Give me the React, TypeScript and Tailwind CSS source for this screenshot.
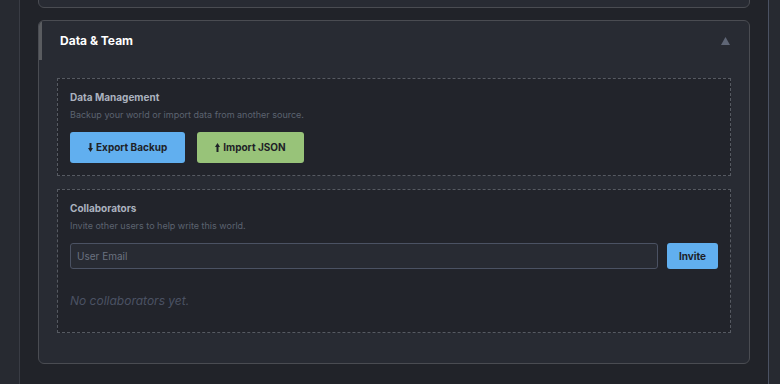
import React from "react";

function DownArrow() {
  return (
    <svg width="5" height="9" viewBox="0 0 5 9" className="inline-block">
      <rect x="1.5" y="0" width="2" height="5.5" fill="#1e2127" />
      <polygon points="0,5 5,5 2.5,9" fill="#1e2127" />
    </svg>
  );
}

function UpArrow() {
  return (
    <svg width="5" height="9" viewBox="0 0 5 9" className="inline-block">
      <rect x="1.5" y="3.5" width="2" height="5.5" fill="#1e2127" />
      <polygon points="0,4 5,4 2.5,0" fill="#1e2127" />
    </svg>
  );
}

export default function App() {
  return (
    <div
      className="w-[780px] h-[384px] overflow-hidden bg-[#272a31] flex"
      style={{ fontFamily: "Inter, 'Noto Sans', sans-serif" }}
    >
      <div className="ml-[19px] w-[750px] h-full bg-[#212329] border-l border-l-[#393c44] border-r border-r-[#4b5263] px-[18px] flex flex-col">
        {/* previous card (scrolled) */}
        <div className="-mt-[40px] h-[48px] shrink-0 rounded-md border border-[#4a4c52] bg-[#282b33]" />

        {/* Data & Team card */}
        <div className="mt-[12px] rounded-md border border-[#4a4c52] bg-[#282b33] overflow-hidden">
          <div className="h-[39px] flex items-center justify-between border-l-[3px] border-l-[#5a5c60] pl-[18px] pr-[19px]">
            <span className="text-white font-bold text-[12px] leading-[16px] mt-[1px]">Data &amp; Team</span>
            <svg width="9" height="8" viewBox="0 0 9 8">
              <polygon points="4.5,0 9,8 0,8" fill="#5f6676" />
            </svg>
          </div>

          <div className="px-[18px] pt-[18px] pb-[18px]">
            {/* Data management */}
            <div className="border border-dashed border-[#565a62] bg-[#22242b] p-[12px] mb-[13px]">
              <div className="text-[#abb2bf] font-bold text-[10px] leading-[13px]">Data Management</div>
              <div className="mt-[4px] text-[#5c6370] text-[9px] leading-[13px]">
                Backup your world or import data from another source.
              </div>
              <div className="mt-[11px] flex gap-[12px]">
                <button className="h-[31px] px-[18px] rounded-[3px] bg-[#61afef] text-[#1e2127] font-bold text-[10px] flex items-center gap-[3px]">
                  <DownArrow />
                  Export Backup
                </button>
                <button className="h-[31px] px-[18px] rounded-[3px] bg-[#98c379] text-[#1e2127] font-bold text-[10px] flex items-center gap-[3px]">
                  <UpArrow />
                  Import JSON
                </button>
              </div>
            </div>

            {/* Collaborators */}
            <div className="border border-dashed border-[#565a62] bg-[#22242b] p-[12px] mb-[12px]">
              <div className="text-[#abb2bf] font-bold text-[10px] leading-[13px]">Collaborators</div>
              <div className="mt-[4px] text-[#5c6370] text-[9px] leading-[13px]">
                Invite other users to help write this world.
              </div>
              <div className="mt-[11px] flex gap-[9px]">
                <input
                  placeholder="User Email"
                  className="flex-1 h-[26px] rounded-[3px] border border-[#4b5263] bg-[#282b33] px-[6px] text-[10px] text-[#abb2bf] placeholder:text-[#6b7280] outline-none"
                />
                <button className="h-[26px] px-[12px] rounded-[3px] bg-[#61afef] text-[#1e2127] font-bold text-[10px]">
                  Invite
                </button>
              </div>
              <div className="mt-[14px] pt-[10px] pb-[11px] text-[#4b5263] italic text-[12px] leading-[16px]">
                No collaborators yet.
              </div>
            </div>
          </div>
        </div>
      </div>
    </div>
  );
}
